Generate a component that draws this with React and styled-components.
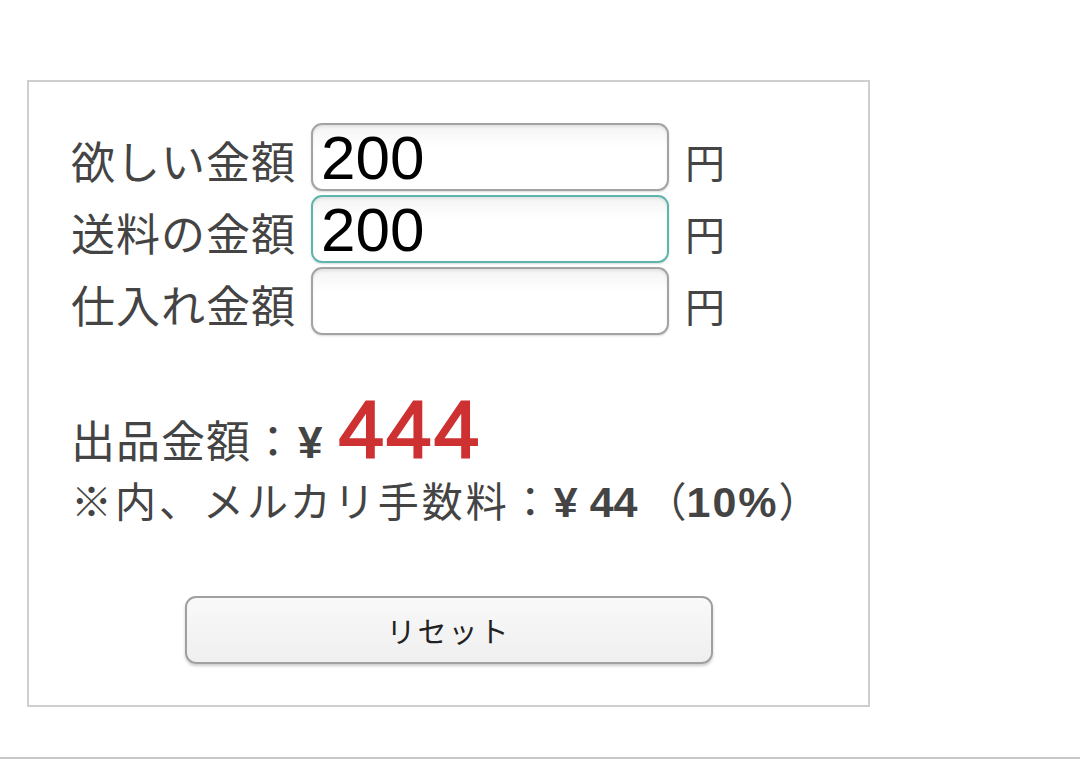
import React, { useState } from "react";
import styled, { createGlobalStyle } from "styled-components";

const GlobalStyle = createGlobalStyle`
  html, body {
    margin: 0;
    padding: 0;
    background: #fff;
  }
  body {
    font-family: "Liberation Sans", "Noto Sans CJK JP", sans-serif;
    color: #444;
  }
`;

const Page = styled.div`
  height: 759px;
  box-sizing: border-box;
  padding: 80px 0 0 27px;
  border-bottom: 2px solid #c8c8c8;
`;

const Card = styled.div`
  width: 843px;
  height: 627px;
  box-sizing: border-box;
  border: 2px solid #cfcfcf;
  padding: 41px 0 0 42px;
  display: flex;
  flex-direction: column;
`;

const Fields = styled.div`
  display: flex;
  flex-direction: column;
  gap: 4px;
`;

const Row = styled.div`
  display: flex;
  align-items: center;
  height: 68px;
`;

const Label = styled.label`
  width: 240px;
  font-family: "Noto Sans CJK JP", sans-serif;
  font-size: 44px;
  letter-spacing: 1px;
  line-height: 1;
  color: #444;
  white-space: nowrap;
  padding-top: 6px;
`;

const Input = styled.input`
  width: 358px;
  height: 68px;
  box-sizing: border-box;
  border: 2px solid ${(p) => (p.focused ? "#5cb6ad" : "#a3a3a3")};
  border-radius: 11px;
  background: linear-gradient(#f4f4f4, #ffffff 35%);
  box-shadow: inset 0 2px 3px rgba(0, 0, 0, 0.08),
    0 1px 2px rgba(0, 0, 0, 0.15);
  padding: 0 0 0 8px;
  font-family: "Liberation Sans", sans-serif;
  font-size: 62px;
  color: #000;
  outline: none;
`;

const Unit = styled.span`
  margin-left: 16px;
  font-family: "Noto Sans CJK JP", sans-serif;
  font-size: 40px;
  color: #444;
  padding-top: 8px;
`;

const Result = styled.div`
  margin-top: 54px;
  display: flex;
  align-items: baseline;
  font-size: 44px;
  color: #444;
  line-height: 1;
`;

const Jp = styled.span`
  font-family: "Noto Sans CJK JP", sans-serif;
  letter-spacing: ${(p) => p.spacing || 0}px;
  margin-left: ${(p) => p.gap || 0}px;
`;

const Yen = styled.span`
  font-family: "Liberation Sans", sans-serif;
  font-weight: 700;
  margin-left: 2px;
`;

const Price = styled.span`
  margin-left: 16px;
  font-family: "Liberation Sans", sans-serif;
  font-size: 82px;
  color: #cd3131;
  -webkit-text-stroke: 2px #cd3131;
  letter-spacing: 2px;
`;

const Fee = styled.div`
  margin-top: 8px;
  font-size: 41px;
  color: #444;
  line-height: 1;
  white-space: nowrap;
`;

const Num = styled.span`
  font-family: "Liberation Sans", sans-serif;
  font-weight: 700;
  font-size: 43px;
  letter-spacing: ${(p) => p.spacing || 0}px;
  margin-left: ${(p) => p.gap || 0}px;
`;

const ButtonRow = styled.div`
  margin-top: 72px;
  padding-right: 42px;
  display: flex;
  justify-content: center;
`;

const ResetButton = styled.button`
  width: 528px;
  height: 68px;
  border: 2px solid #a0a0a0;
  border-radius: 11px;
  background: linear-gradient(#f9f9f9, #efefef);
  box-shadow: 0 2px 3px rgba(0, 0, 0, 0.2);
  font-family: "Noto Sans CJK JP", sans-serif;
  font-size: 29px;
  color: #222;
  letter-spacing: 2px;
  cursor: pointer;
`;

export default function App() {
  const [want, setWant] = useState("200");
  const [ship, setShip] = useState("200");
  const [cost, setCost] = useState("");

  const total = Math.floor((Number(want || 0) + Number(ship || 0) + Number(cost || 0)) / 0.9);
  const fee = Math.floor(total * 0.1);

  const reset = () => {
    setWant("");
    setShip("");
    setCost("");
  };

  return (
    <>
      <GlobalStyle />
      <Page>
        <Card>
          <Fields>
            <Row>
              <Label>欲しい金額</Label>
              <Input value={want} onChange={(e) => setWant(e.target.value)} />
              <Unit>円</Unit>
            </Row>
            <Row>
              <Label>送料の金額</Label>
              <Input focused value={ship} onChange={(e) => setShip(e.target.value)} />
              <Unit>円</Unit>
            </Row>
            <Row>
              <Label>仕入れ金額</Label>
              <Input value={cost} onChange={(e) => setCost(e.target.value)} />
              <Unit>円</Unit>
            </Row>
          </Fields>

          <Result>
            <Jp spacing={1}>出品金額：</Jp>
            <Yen>¥</Yen>
            <Price>{total}</Price>
          </Result>
          <Fee>
            <Jp spacing={3}>※内、メルカリ手数料：</Jp>
            <Num>¥ {fee}</Num>
            <Jp gap={8}>（</Jp>
            <Num spacing={2}>10%</Num>
            <Jp>）</Jp>
          </Fee>

          <ButtonRow>
            <ResetButton onClick={reset}>リセット</ResetButton>
          </ButtonRow>
        </Card>
      </Page>
    </>
  );
}
